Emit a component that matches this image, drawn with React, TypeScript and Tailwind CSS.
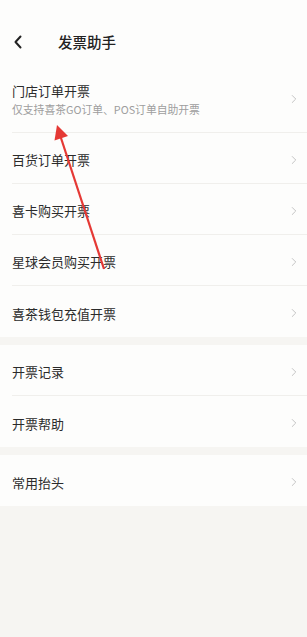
import { ChevronRight } from "lucide-react";

const groups = [
  [
    { label: "门店订单开票", sub: "仅支持喜茶GO订单、POS订单自助开票" },
    { label: "百货订单开票" },
    { label: "喜卡购买开票" },
    { label: "星球会员购买开票" },
    { label: "喜茶钱包充值开票" },
  ],
  [{ label: "开票记录" }, { label: "开票帮助" }],
  [{ label: "常用抬头" }],
];

type Item = { label: string; sub?: string };

function Row({ item, last }: { item: Item; last: boolean }) {
  return (
    <div
      className={
        "flex items-center pr-[6px] " +
        (item.sub ? "h-[67px] " : "h-[51px] pt-[3px] ") +
        (last ? "" : "border-b border-[#f0efec]")
      }
    >
      <div className="flex-1 flex flex-col">
        <span className="text-[13px] leading-[19px] text-[#2b2b2b]">{item.label}</span>
        {item.sub && (
          <span className="text-[10.8px] leading-[16px] text-[#9e9e9e] mt-[1px]">{item.sub}</span>
        )}
      </div>
      <ChevronRight className="w-[14px] h-[14px] text-[#b3b3b3]" strokeWidth={1.3} />
    </div>
  );
}

export default function App() {
  return (
    <div
      className="relative min-h-[637px] bg-[#f6f5f2]"
      style={{ fontFamily: '"Noto Sans CJK SC", "Noto Sans", sans-serif' }}
    >
      <header className="bg-[#fdfdfc] pt-[20px] h-[66px] flex items-start">
        <div className="h-[44px] flex items-center w-full">
          <svg className="ml-[13px] w-[10px] h-[14px]" viewBox="0 0 10 14" fill="none">
            <path d="M7.5 1.5 L2.5 7 L7.5 12.5" stroke="#222" strokeWidth="2" strokeLinecap="round" strokeLinejoin="round" />
          </svg>
          <h1 className="ml-[35px] text-[14.5px] text-[#222] font-medium">发票助手</h1>
        </div>
      </header>

      <div className="flex flex-col gap-[8px]">
        {groups.map((g, gi) => (
          <div key={gi} className="bg-[#fdfdfc] pl-[12px]">
            {g.map((item, i) => (
              <Row key={item.label} item={item} last={i === g.length - 1} />
            ))}
          </div>
        ))}
      </div>

      {/* annotation arrow */}
      <svg className="absolute left-0 top-0 pointer-events-none" width="307" height="637">
        <line x1="104" y1="269" x2="60" y2="135" stroke="#e53935" strokeWidth="2.2" />
        <polygon points="57,125 68,136 54.5,140.5" fill="#e53935" />
      </svg>
    </div>
  );
}
